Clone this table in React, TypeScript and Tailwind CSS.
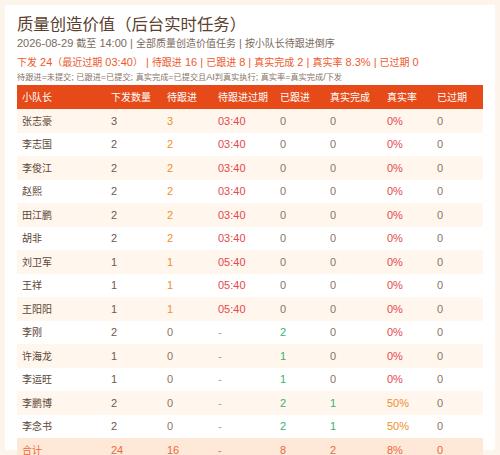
type Row = {
  name: string;
  sent: number;
  pending: number;
  due: string;
  done: number;
  real: number;
  rate: string;
  expired: number;
};

const rows: Row[] = [
  { name: "张志豪", sent: 3, pending: 3, due: "03:40", done: 0, real: 0, rate: "0%", expired: 0 },
  { name: "李志国", sent: 2, pending: 2, due: "03:40", done: 0, real: 0, rate: "0%", expired: 0 },
  { name: "李俊江", sent: 2, pending: 2, due: "03:40", done: 0, real: 0, rate: "0%", expired: 0 },
  { name: "赵熙", sent: 2, pending: 2, due: "03:40", done: 0, real: 0, rate: "0%", expired: 0 },
  { name: "田江鹏", sent: 2, pending: 2, due: "03:40", done: 0, real: 0, rate: "0%", expired: 0 },
  { name: "胡非", sent: 2, pending: 2, due: "03:40", done: 0, real: 0, rate: "0%", expired: 0 },
  { name: "刘卫军", sent: 1, pending: 1, due: "05:40", done: 0, real: 0, rate: "0%", expired: 0 },
  { name: "王祥", sent: 1, pending: 1, due: "05:40", done: 0, real: 0, rate: "0%", expired: 0 },
  { name: "王阳阳", sent: 1, pending: 1, due: "05:40", done: 0, real: 0, rate: "0%", expired: 0 },
  { name: "李刚", sent: 2, pending: 0, due: "-", done: 2, real: 0, rate: "0%", expired: 0 },
  { name: "许海龙", sent: 1, pending: 0, due: "-", done: 1, real: 0, rate: "0%", expired: 0 },
  { name: "李运旺", sent: 1, pending: 0, due: "-", done: 1, real: 0, rate: "0%", expired: 0 },
  { name: "李鹏博", sent: 2, pending: 0, due: "-", done: 2, real: 1, rate: "50%", expired: 0 },
  { name: "李念书", sent: 2, pending: 0, due: "-", done: 2, real: 1, rate: "50%", expired: 0 },
];

const headers = ["小队长", "下发数量", "待跟进", "待跟进过期", "已跟进", "真实完成", "真实率", "已过期"];
const widths = ["w-[89px]", "w-[56px]", "w-[51px]", "w-[62px]", "w-[50px]", "w-[57px]", "w-[50px]", "w-[51px]"];

// CJK runs are set a touch smaller than the latin text, as in the source page
function Mixed({ text }: { text: string }) {
  const parts = text.split(/([\u3000-\u9fff\uff00-\uffef]+)/);
  return (
    <>
      {parts.map((p, i) =>
        i % 2 === 1 ? (
          <span key={i} className="text-[0.91em]">
            {p}
          </span>
        ) : (
          p
        ),
      )}
    </>
  );
}

export default function App() {
  return (
    <div
      className="h-[455px] overflow-hidden bg-[#fdf4ec] p-[5px]"
      style={{ fontFamily: '"Liberation Sans", "Noto Sans CJK SC", sans-serif' }}
    >
      <div className="h-[445px] bg-white px-[12px] pt-[8px]">
        <h1 className="text-[18px] leading-[22px] text-[#5b3f2f]">
          <Mixed text="质量创造价值（后台实时任务）" />
        </h1>
        <p className="text-[11px] leading-[16px] text-[#7b6a5e]">
          <Mixed text="2026-08-29 截至 14:00 | 全部质量创造价值任务 | 按小队长待跟进倒序" />
        </p>
        <p className="mt-[2px] text-[11px] leading-[16px] text-[#ee5a2e]">
          <Mixed text="下发 24（最近过期 03:40） | 待跟进 16 | 已跟进 8 | 真实完成 2 | 真实率 8.3% | 已过期 0" />
        </p>
        <p className="mb-[1px] text-[9px] leading-[12px] text-[#857469]">
          <Mixed text="待跟进=未提交; 已跟进=已提交; 真实完成=已提交且AI判真实执行; 真实率=真实完成/下发" />
        </p>
        <table className="w-[466px] table-fixed border-collapse text-left text-[11px]">
          <thead>
            <tr className="h-[24px] bg-[#e64a19] text-white">
              {headers.map((h, i) => (
                <th key={h} className={`${widths[i]} px-[5px] font-normal`}>
                  <Mixed text={h} />
                </th>
              ))}
            </tr>
          </thead>
          <tbody>
            {rows.map((r, i) => (
              <tr key={r.name} className={`h-[23.5px] ${i % 2 === 0 ? "bg-[#fff6ee]" : "bg-white"}`}>
                <td className="px-[5px] text-[#5b4636]">
                  <Mixed text={r.name} />
                </td>
                <td className="px-[5px] text-[#6f5a4c]">{r.sent}</td>
                <td className={`px-[5px] ${r.pending > 0 ? "text-[#ee8f2a]" : "text-[#8a7566]"}`}>{r.pending}</td>
                <td className={`px-[5px] ${r.due === "-" ? "text-[#a89a90]" : "text-[#e5484d]"}`}>{r.due}</td>
                <td className={`px-[5px] ${r.done > 0 ? "text-[#38b36a]" : "text-[#8a7566]"}`}>{r.done}</td>
                <td className={`px-[5px] ${r.real > 0 ? "text-[#38b36a]" : "text-[#8a7566]"}`}>{r.real}</td>
                <td className={`px-[5px] ${r.rate === "0%" ? "text-[#e5484d]" : "text-[#ee8f2a]"}`}>{r.rate}</td>
                <td className="px-[5px] text-[#8a7566]">{r.expired}</td>
              </tr>
            ))}
            <tr className="h-[23.5px] bg-[#fee8d8] text-[#f0683a]">
              <td className="px-[5px]">
                <Mixed text="合计" />
              </td>
              <td className="px-[5px]">24</td>
              <td className="px-[5px]">16</td>
              <td className="px-[5px]">-</td>
              <td className="px-[5px]">8</td>
              <td className="px-[5px]">2</td>
              <td className="px-[5px]">8%</td>
              <td className="px-[5px]">0</td>
            </tr>
          </tbody>
        </table>
      </div>
    </div>
  );
}
